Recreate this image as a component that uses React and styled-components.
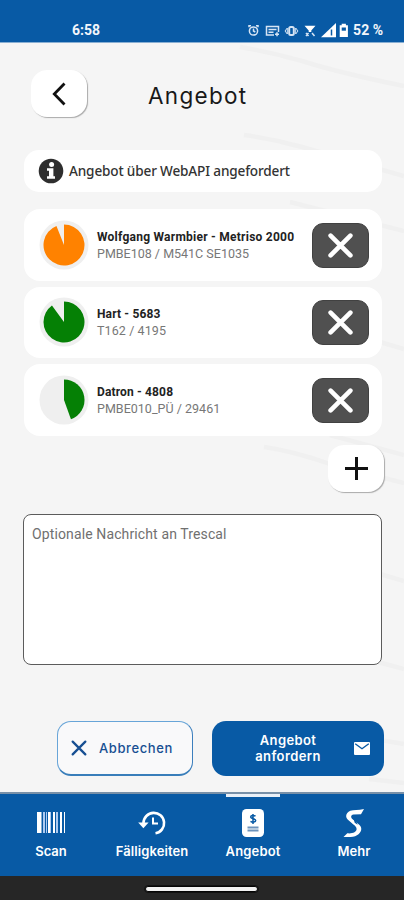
import React from 'react';
import styled, { createGlobalStyle } from 'styled-components';

const BLUE = '#085aa5';

const GlobalStyle = createGlobalStyle`
  * { box-sizing: border-box; }
  body { margin: 0; background: #f5f5f5; font-family: Roboto, sans-serif; }
  button { font: inherit; padding: 0; border: 0; }
  svg { display: block; flex: none; }
`;

const Screen = styled.div`
  position: relative;
  width: 404px;
  height: 900px;
  display: flex;
  flex-direction: column;
  overflow: hidden;
  background: #f5f5f5;
`;

const Backdrop = styled.svg`
  position: absolute;
  inset: 0;
  z-index: 0;
`;

const StatusBar = styled.header`
  z-index: 1;
  height: 43px;
  flex: none;
  display: flex;
  align-items: center;
  justify-content: space-between;
  padding: 17px 21px 0 72px;
  background: ${BLUE};
  border-bottom: 1px solid #89afd3;
  color: #f2f6fb;
`;

const StatusText = styled.span`
  font: 700 14px/16px Roboto, sans-serif;
  letter-spacing: ${(p) => p.$spacing || '0'};
  white-space: nowrap;
`;

const StatusIcons = styled.div`
  display: flex;
  align-items: center;
`;

const Content = styled.main`
  z-index: 1;
  flex: 1;
  min-height: 0;
  display: flex;
  flex-direction: column;
  padding: 27px 20px 0 24px;
`;

const TitleRow = styled.div`
  display: flex;
  align-items: center;
  height: 47px;
  padding-left: 7px;
`;

const SquareButton = styled.button`
  width: 56px;
  height: 47px;
  flex: none;
  display: grid;
  place-items: center;
  border-radius: 16px;
  background: #fff;
  color: #111;
  box-shadow: 1px 1px 1px #aaa;
`;

const Title = styled.h1`
  margin: 4px 0 0 61px;
  font: 400 22.5px/28px Inter, sans-serif;
  letter-spacing: ${(p) => p.$spacing};
  color: #181818;
`;

const InfoCard = styled.section`
  display: flex;
  align-items: center;
  width: 358px;
  height: 42px;
  margin-top: 33px;
  padding: 0 0 0 14px;
  gap: 5px;
  border-radius: 15px;
  background: #fff;
`;

const InfoText = styled.span`
  font: 500 13.6px/20px "Noto Sans", sans-serif;
  letter-spacing: -0.16px;
  color: #333;
  padding-bottom: 1px;
`;

const DeviceList = styled.section`
  display: flex;
  flex-direction: column;
  gap: 6px;
  width: 358px;
  margin-top: 17px;
`;

const DeviceCard = styled.article`
  display: flex;
  align-items: center;
  height: 71.5px;
  padding: 0 13px 0 15px;
  border-radius: 16px;
  background: #fff;
`;

const DeviceCopy = styled.div`
  flex: 1;
  min-width: 0;
  padding: 1px 0 0 8px;
  white-space: nowrap;
`;

const DeviceName = styled.div`
  font: 700 12px/16px Roboto, sans-serif;
  letter-spacing: ${(p) => p.$spacing};
  color: #222;
`;

const DeviceMeta = styled.div`
  font: 400 12.5px/17px Roboto, sans-serif;
  letter-spacing: ${(p) => p.$spacing};
  color: #777;
`;

const RemoveButton = styled.button`
  width: 57px;
  height: 45px;
  margin-top: 1px;
  flex: none;
  display: grid;
  place-items: center;
  border-radius: 11px;
  border: 1px solid #414141;
  background: #505050;
`;

const AddRow = styled.div`
  display: flex;
  justify-content: flex-end;
  margin-top: 9px;
`;

const Message = styled.textarea`
  display: block;
  width: 359px;
  height: 151px;
  flex: none;
  margin: 22px 0 0 -1px;
  padding: 10px 8px;
  resize: none;
  border: 1px solid #5c5c5c;
  border-radius: 8px;
  background: #fff;
  font: 400 14px/19px Roboto, sans-serif;
  letter-spacing: 0.12px;

  &::placeholder { color: #707070; opacity: 1; }
`;

const Actions = styled.div`
  display: flex;
  justify-content: flex-end;
  gap: 19px;
  margin-top: 56px;
`;

const ActionButton = styled.button`
  display: flex;
  align-items: center;
  height: 55px;
  border-radius: 14px;
  font: 500 13px/16px Inter, sans-serif;
`;

const CancelButton = styled(ActionButton)`
  width: 136px;
  gap: 12px;
  padding-left: 13px;
  background: #f9f9fa;
  border: 1px solid #68a5d8;
  border-right-color: #3c7fbd;
  border-bottom: 2px solid #397eba;
  color: #174f92;
  letter-spacing: 0.6px;
`;

const RequestButton = styled(ActionButton)`
  width: 172px;
  padding-right: 14px;
  background: ${BLUE};
  color: #fff;
  font-weight: 600;
`;

const RequestLabel = styled.span`
  flex: 1;
  padding: 0 0 1px 10px;
  text-align: center;
  letter-spacing: 0.4px;
`;

const TabBar = styled.nav`
  z-index: 1;
  height: 84px;
  flex: none;
  display: grid;
  grid-template-columns: repeat(4, 101px);
  background: ${BLUE};
  border-top: 2px solid #7890a8;
`;

const Tab = styled.div`
  position: relative;
  display: flex;
  flex-direction: column;
  align-items: center;
  padding: 14px 0 0 1px;
  color: #fff;
`;

const ActiveMark = styled.i`
  position: absolute;
  top: 0;
  left: 24px;
  width: 54px;
  height: 3px;
  background: #e9f0f8;
`;

const TabArt = styled.div`
  height: 29px;
  display: grid;
  place-items: center;
`;

const TabLabel = styled.span`
  margin-top: 5px;
  font: 600 13px/18px Inter, sans-serif;
  letter-spacing: ${(p) => p.$spacing};
  white-space: nowrap;
`;

const GestureArea = styled.footer`
  z-index: 1;
  height: 24px;
  flex: none;
  display: flex;
  justify-content: center;
  padding: 10px 2px 0 0;
  background: #262626;
`;

const GestureBar = styled.div`
  width: 113px;
  height: 6px;
  border: 1px solid #060606;
  outline: 1px solid #121212;
  border-radius: 4px;
  background: #f2f2f2;
`;

function Lines() {
  return (
    <Backdrop width="404" height="900" fill="none" stroke="#f0f0f0" strokeWidth="4.5">
      <path d="M240 47 Q270 52 302 61 Q340 73 404 86M244 135 Q274 139 302 147 L404 176M290 202 L404 231M264 447 Q293 451 330 464 L404 483M330 435 L404 455M380 342 L404 349M380 574 L404 581M378 662 L404 669M380 740 L404 744M369 779 L404 783" />
    </Backdrop>
  );
}

function StatusGlyphs() {
  return (
    <svg width="104" height="18" viewBox="246 20 104 18" fill="none" stroke="#d6e4f4" strokeWidth="1.5">
      <circle cx="253.5" cy="30" r="4.1" />
      <path d="M249 26.3v-1.6h2M258 26.3v-1.6h-2M253.5 27.5V30l1.8 1" />
      <path d="M274 34h-7.5v-8.5h12v5.5M268.5 28.5h8M268.5 31.2h5M275 33.2h4M277 31.2v4" />
      <rect x="289.2" y="26" width="4.6" height="8" rx="1.5" strokeWidth="2" />
      <path d="m287.3 27-2.3 3 2.3 3zM295.7 27l2.3 3-2.3 3z" strokeWidth="1" />
      <path d="M304.5 24.8h11l-4.2 4.7v1.5h-2.6v-1.5z" fill="#fff" stroke="none" />
      <path d="m306 32 2.5 3m-2.5 0 2.5-3M312 32l2.5 3" />
      <path d="M321 36.3 336 22v14.3z" fill="#fff" stroke="none" />
      <path d="M331.5 28.5v6" stroke={BLUE} />
      <path d="M339.7 24.3h2V22.7h4.2v1.6h2V36h-8.2z" fill="#fff" stroke="none" />
      <path d="M341.7 26.5h4.2v3.2h-4.2z" fill={BLUE} stroke="none" />
    </svg>
  );
}

function BackIcon() {
  return <svg width="14" height="24" viewBox="0 0 14 24" fill="none" stroke="currentColor" strokeWidth="2.8"><path d="M12.5 1.5 2.3 12l10.2 10.5" /></svg>;
}

function InfoIcon() {
  return (
    <svg width="26" height="26" viewBox="0 0 26 26">
      <circle cx="13" cy="13" r="12.3" fill="#2e2e2e" />
      <circle cx="13.6" cy="6.4" r="2.5" fill="#fff" />
      <path d="M9 10.2h6.4v8.1H17v2.5H9v-2.5h2v-5.6H9z" fill="#fff" />
    </svg>
  );
}

function Pie({ value, color }) {
  const angle = value * Math.PI * 2;
  const x = 25 + 20.5 * Math.sin(angle);
  const y = 25 - 20.5 * Math.cos(angle);
  return (
    <svg width="50" height="50" viewBox="0 0 50 50">
      <circle cx="25" cy="25" r="24.5" fill="#efefef" />
      <path d={`M25 25V4.5A20.5 20.5 0 ${value > 0.5 ? 1 : 0} 1 ${x} ${y}Z`} fill={color} />
    </svg>
  );
}

function Cross({ size, color, width }) {
  return <svg width={size} height={size} viewBox="0 0 24 24"><path d="m2.5 2.5 19 19M21.5 2.5l-19 19" fill="none" stroke={color} strokeWidth={width} strokeLinecap="round" /></svg>;
}

function BarcodeIcon() {
  return (
    <svg width="30" height="26" viewBox="0 0 30 26">
      <path d="M1 2h4.5v21H1zm11 0h2v21h-2zm5 0h2v21h-2zm7 0h2v21h-2zm4 0h1v21h-1z" fill="#fff" />
      <path d="M7 2h2v21H7zm3 0h1v21h-1zm4 0h1v21h-1zm6 0h2v21h-2z" fill="#adcaf0" />
    </svg>
  );
}

function HistoryIcon() {
  return (
    <svg width="30" height="26" viewBox="0 0 30 26" fill="none" stroke="#fff" strokeWidth="2.6">
      <path d="M6.5 13A10.3 10.3 0 1 1 18.5 23.3" />
      <path d="M1.2 12.5h10.4L6.4 18.3z" fill="#fff" stroke="none" />
      <path d="M16 7.5v6h5" strokeWidth="2" />
    </svg>
  );
}

function QuoteIcon() {
  return (
    <svg width="24" height="28" viewBox="0 0 24 28">
      <rect x="1" width="22" height="28" rx="4.5" fill="#fff" />
      <path d="M14.5 7.2c-2.1-1.3-5-.7-4.8 1 .2 1.8 5 1.2 5 3.2 0 1.8-3.1 2.2-5.2.9M12 5v10" fill="none" stroke={BLUE} strokeWidth="1.5" />
      <path d="M6.5 18.5h11M6.5 21.5h11" stroke="#6d93bc" strokeWidth="2" />
    </svg>
  );
}

function MoreIcon() {
  return (
    <svg width="22" height="28" viewBox="0 0 22 28" fill="#fff">
      <path d="M21 0 18 5.2 10.5 5.6C8 6 7.5 8 9 9.7l7.2 6.1c3.4 3 2.2 7-.7 9.4C12.5 28 6.7 28.4.5 28l3.8-3.7c5.2.6 9.3-1.4 9.3-4.3 0-1.7-1.2-2.8-3.2-4.4L5.2 11C1.5 7.7 3.2 3.5 7.3 1.8 10.5.6 15.5 1.5 21 0z" />
      <path d="m10.5 9.5 1.2 4.2 3 2-1.8-4z" fill={BLUE} />
    </svg>
  );
}

function MailIcon() {
  return <svg width="16" height="13" viewBox="0 0 16 13"><rect width="16" height="13" rx="1" fill="#fff" /><path d="m1.2 1.7 6.8 5 6.8-5" fill="none" stroke={BLUE} strokeWidth="1.4" /></svg>;
}

const devices = [
  { name: 'Wolfgang Warmbier - Metriso 2000', meta: 'PMBE108 / M541C SE1035', value: 0.94, color: '#ff8200', nameSpacing: '0.25px', metaSpacing: '0px' },
  { name: 'Hart - 5683', meta: 'T162 / 4195', value: 0.9, color: '#058005', nameSpacing: '0.15px', metaSpacing: '0.1px' },
  { name: 'Datron - 4808', meta: 'PMBE010_PÜ / 29461', value: 0.445, color: '#058005', nameSpacing: '0.15px', metaSpacing: '0.02px' },
];

const tabs = [
  { label: 'Scan', Icon: BarcodeIcon, spacing: '0px' },
  { label: 'Fälligkeiten', Icon: HistoryIcon, spacing: '0.1px' },
  { label: 'Angebot', Icon: QuoteIcon, spacing: '0.15px', active: true },
  { label: 'Mehr', Icon: MoreIcon, spacing: '0.1px' },
];

export default function App() {
  return (
    <Screen>
      <GlobalStyle />
      <Lines />
      <StatusBar>
        <StatusText>6:58</StatusText>
        <StatusIcons>
          <StatusGlyphs />
          <StatusText $spacing="0px">&nbsp;52 %</StatusText>
        </StatusIcons>
      </StatusBar>
      <Content>
        <TitleRow>
          <SquareButton aria-label="Zurück"><BackIcon /></SquareButton>
          <Title $spacing="1.3px">Angebot</Title>
        </TitleRow>
        <InfoCard>
          <InfoIcon />
          <InfoText>Angebot über WebAPI angefordert</InfoText>
        </InfoCard>
        <DeviceList>
          {devices.map((d) => (
            <DeviceCard key={d.name}>
              <Pie value={d.value} color={d.color} />
              <DeviceCopy>
                <DeviceName $spacing={d.nameSpacing}>{d.name}</DeviceName>
                <DeviceMeta $spacing={d.metaSpacing}>{d.meta}</DeviceMeta>
              </DeviceCopy>
              <RemoveButton aria-label="Entfernen"><Cross size={25} color="#fff" width={4.4} /></RemoveButton>
            </DeviceCard>
          ))}
        </DeviceList>
        <AddRow>
          <SquareButton aria-label="Hinzufügen">
            <svg width="23" height="23" viewBox="0 0 23 23"><path d="M11.5 0v23M0 11.5h23" stroke="#111" strokeWidth="3" /></svg>
          </SquareButton>
        </AddRow>
        <Message placeholder="Optionale Nachricht an Trescal" />
        <Actions>
          <CancelButton><Cross size={16} color="#174f92" width={3.4} />Abbrechen</CancelButton>
          <RequestButton><RequestLabel>Angebot<br />anfordern</RequestLabel><MailIcon /></RequestButton>
        </Actions>
      </Content>
      <TabBar>
        {tabs.map(({ label, Icon, spacing, active }) => (
          <Tab key={label}>
            {active && <ActiveMark />}
            <TabArt><Icon /></TabArt>
            <TabLabel $spacing={spacing}>{label}</TabLabel>
          </Tab>
        ))}
      </TabBar>
      <GestureArea><GestureBar /></GestureArea>
    </Screen>
  );
}
